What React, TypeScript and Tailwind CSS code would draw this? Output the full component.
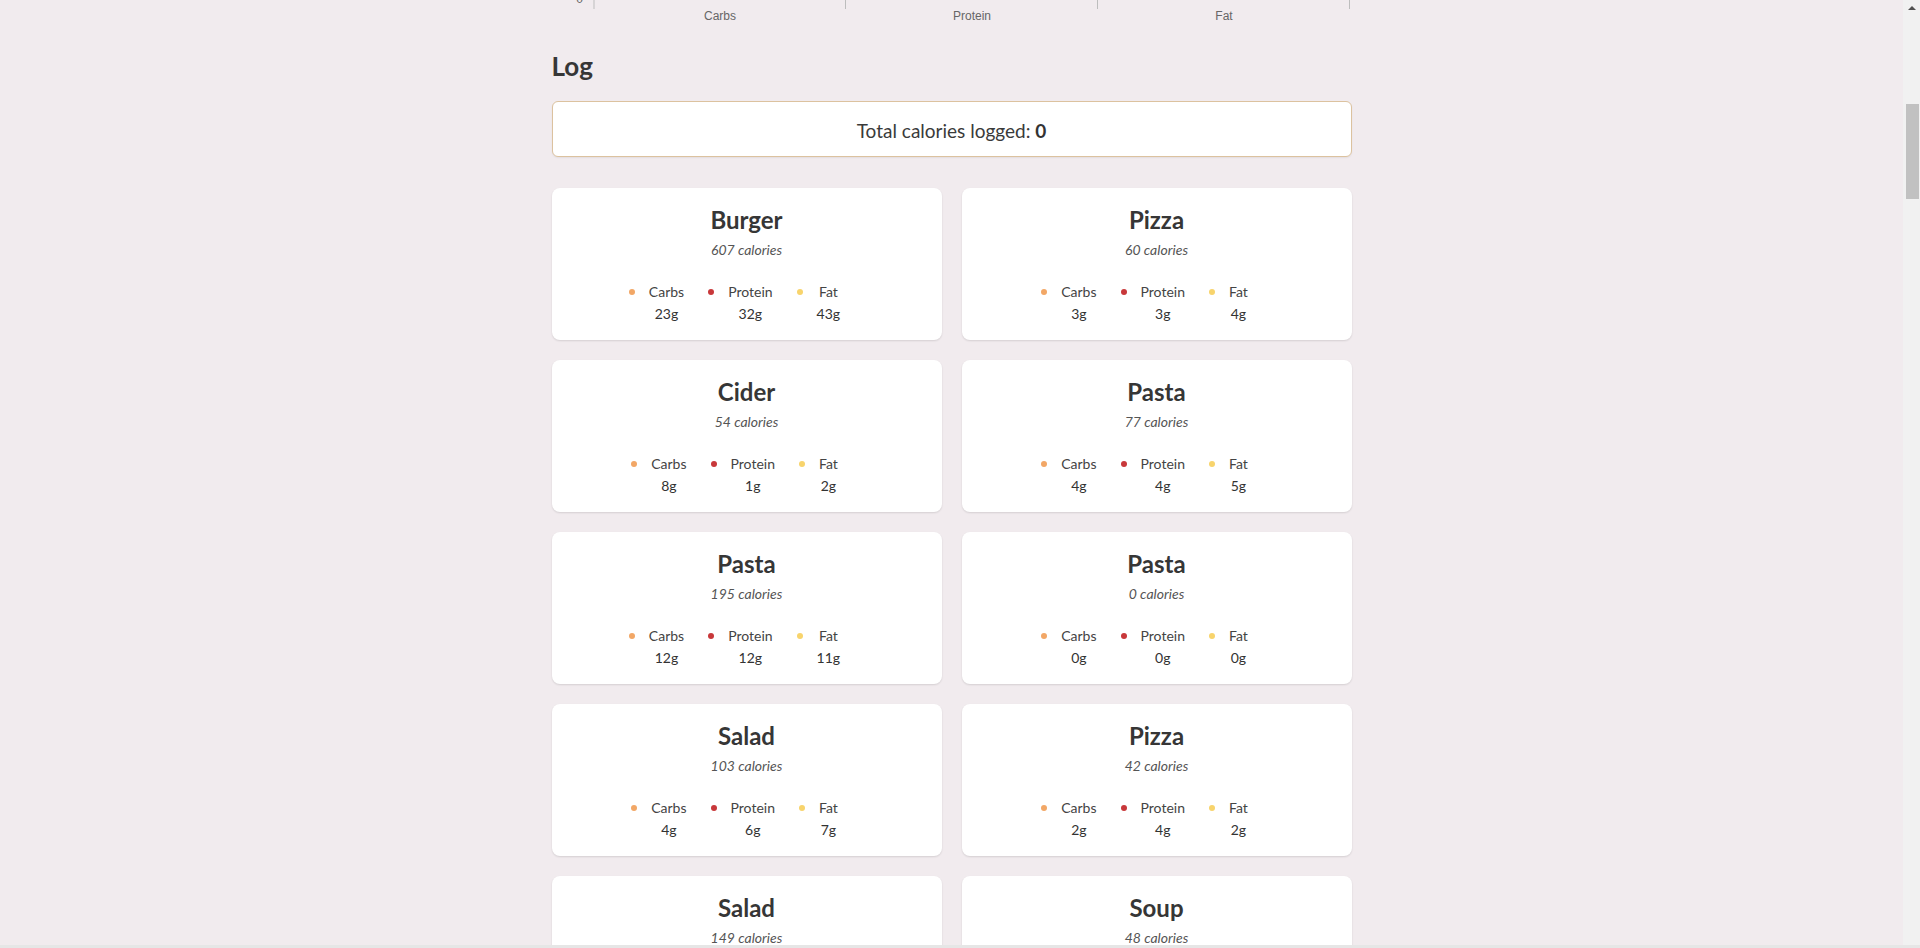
import React from "react";

type Meal = {
  name: string;
  calories: number;
  carbs: number;
  protein: number;
  fat: number;
};

const MEALS: Meal[] = [
  { name: "Burger", calories: 607, carbs: 23, protein: 32, fat: 43 },
  { name: "Pizza", calories: 60, carbs: 3, protein: 3, fat: 4 },
  { name: "Cider", calories: 54, carbs: 8, protein: 1, fat: 2 },
  { name: "Pasta", calories: 77, carbs: 4, protein: 4, fat: 5 },
  { name: "Pasta", calories: 195, carbs: 12, protein: 12, fat: 11 },
  { name: "Pasta", calories: 0, carbs: 0, protein: 0, fat: 0 },
  { name: "Salad", calories: 103, carbs: 4, protein: 6, fat: 7 },
  { name: "Pizza", calories: 42, carbs: 2, protein: 4, fat: 2 },
  { name: "Salad", calories: 149, carbs: 6, protein: 9, fat: 10 },
  { name: "Soup", calories: 48, carbs: 4, protein: 2, fat: 3 },
];

const MACROS = [
  { key: "carbs", label: "Carbs", dot: "bg-[#f2a766]" },
  { key: "protein", label: "Protein", dot: "bg-[#c8383a]" },
  { key: "fat", label: "Fat", dot: "bg-[#f8d46c]" },
] as const;

// bottom strip of the macro chart above the log (page is scrolled past it)
function ChartAxis() {
  const ticks = [42, 293.5, 545.5, 797.5];
  const labels = [
    { x: 168, text: "Carbs" },
    { x: 420, text: "Protein" },
    { x: 672, text: "Fat" },
  ];
  return (
    <svg width="800" height="24" className="block">
      <text
        x="31"
        y="3"
        textAnchor="end"
        fontSize="12"
        fill="#666"
        fontFamily="'Liberation Sans', Arial, sans-serif"
      >
        0
      </text>
      {ticks.map((x) => (
        <line key={x} x1={x} y1="0" x2={x} y2="9" stroke="#bdbdbd" strokeWidth="1" />
      ))}
      {labels.map((l) => (
        <text
          key={l.text}
          x={l.x}
          y="20"
          textAnchor="middle"
          fontSize="12"
          fill="#666"
          fontFamily="'Liberation Sans', Arial, sans-serif"
        >
          {l.text}
        </text>
      ))}
    </svg>
  );
}

function MealCard({ meal }: { meal: Meal }) {
  return (
    <div className="bg-white rounded-lg shadow-[0_1px_2px_rgba(0,0,0,0.12)] pt-4 pb-[15px] text-center">
      <h3 className="text-[24px] leading-[32px] font-bold text-[#363636]">{meal.name}</h3>
      <p className="mt-1 text-[14px] leading-[20px] italic text-[#555]">
        {meal.calories} calories
      </p>
      <div className="mt-[21px] flex justify-center">
        {MACROS.map((m) => (
          <div key={m.key} className="flex items-start mr-6">
            <span className={`mt-[8px] w-[6px] h-[6px] rounded-full ${m.dot}`} />
            <div className="ml-[14px] flex flex-col items-center text-[14px] leading-[22px]">
              <span className="text-[#444]">{m.label}</span>
              <span className="text-[#333]">{meal[m.key]}g</span>
            </div>
          </div>
        ))}
      </div>
    </div>
  );
}

function Scrollbar() {
  return (
    <div className="w-[17px] shrink-0 bg-[#f1f1f1] flex flex-col items-center">
      <div className="mt-[6px] w-0 h-0 border-l-[4px] border-r-[4px] border-b-[4px] border-l-transparent border-r-transparent border-b-[#505050]" />
      <div className="mt-[94px] ml-[2px] w-[13px] h-[95px] bg-[#c1c1c1]" />
    </div>
  );
}

export default function App() {
  return (
    <div
      className="h-[948px] overflow-hidden flex flex-col bg-[#f1ebee]"
      style={{ fontFamily: "Lato, 'Noto Sans', sans-serif" }}
    >
      <div className="flex flex-1 min-h-0">
        <main className="flex-1 min-w-0 overflow-hidden">
          <div className="w-[800px] mx-auto">
            <ChartAxis />

            <h2 className="mt-[26px] text-[26px] leading-[32px] font-bold text-[#363636]">Log</h2>

            <div className="mt-[19px] bg-white border border-[#dcc29f] rounded-md shadow-[0_1px_2px_rgba(0,0,0,0.06)] pt-[15px] pb-[11px] text-center text-[19px] leading-[28px] text-[#3a3a3a]">
              Total calories logged: <span className="font-bold text-[#333]">0</span>
            </div>

            <div className="mt-[31px] grid grid-cols-2 gap-5">
              {MEALS.map((meal, i) => (
                <MealCard key={i} meal={meal} />
              ))}
            </div>
          </div>
        </main>
        <Scrollbar />
      </div>
      <div className="h-[3px] shrink-0 bg-[#e6e6e6]" />
    </div>
  );
}
